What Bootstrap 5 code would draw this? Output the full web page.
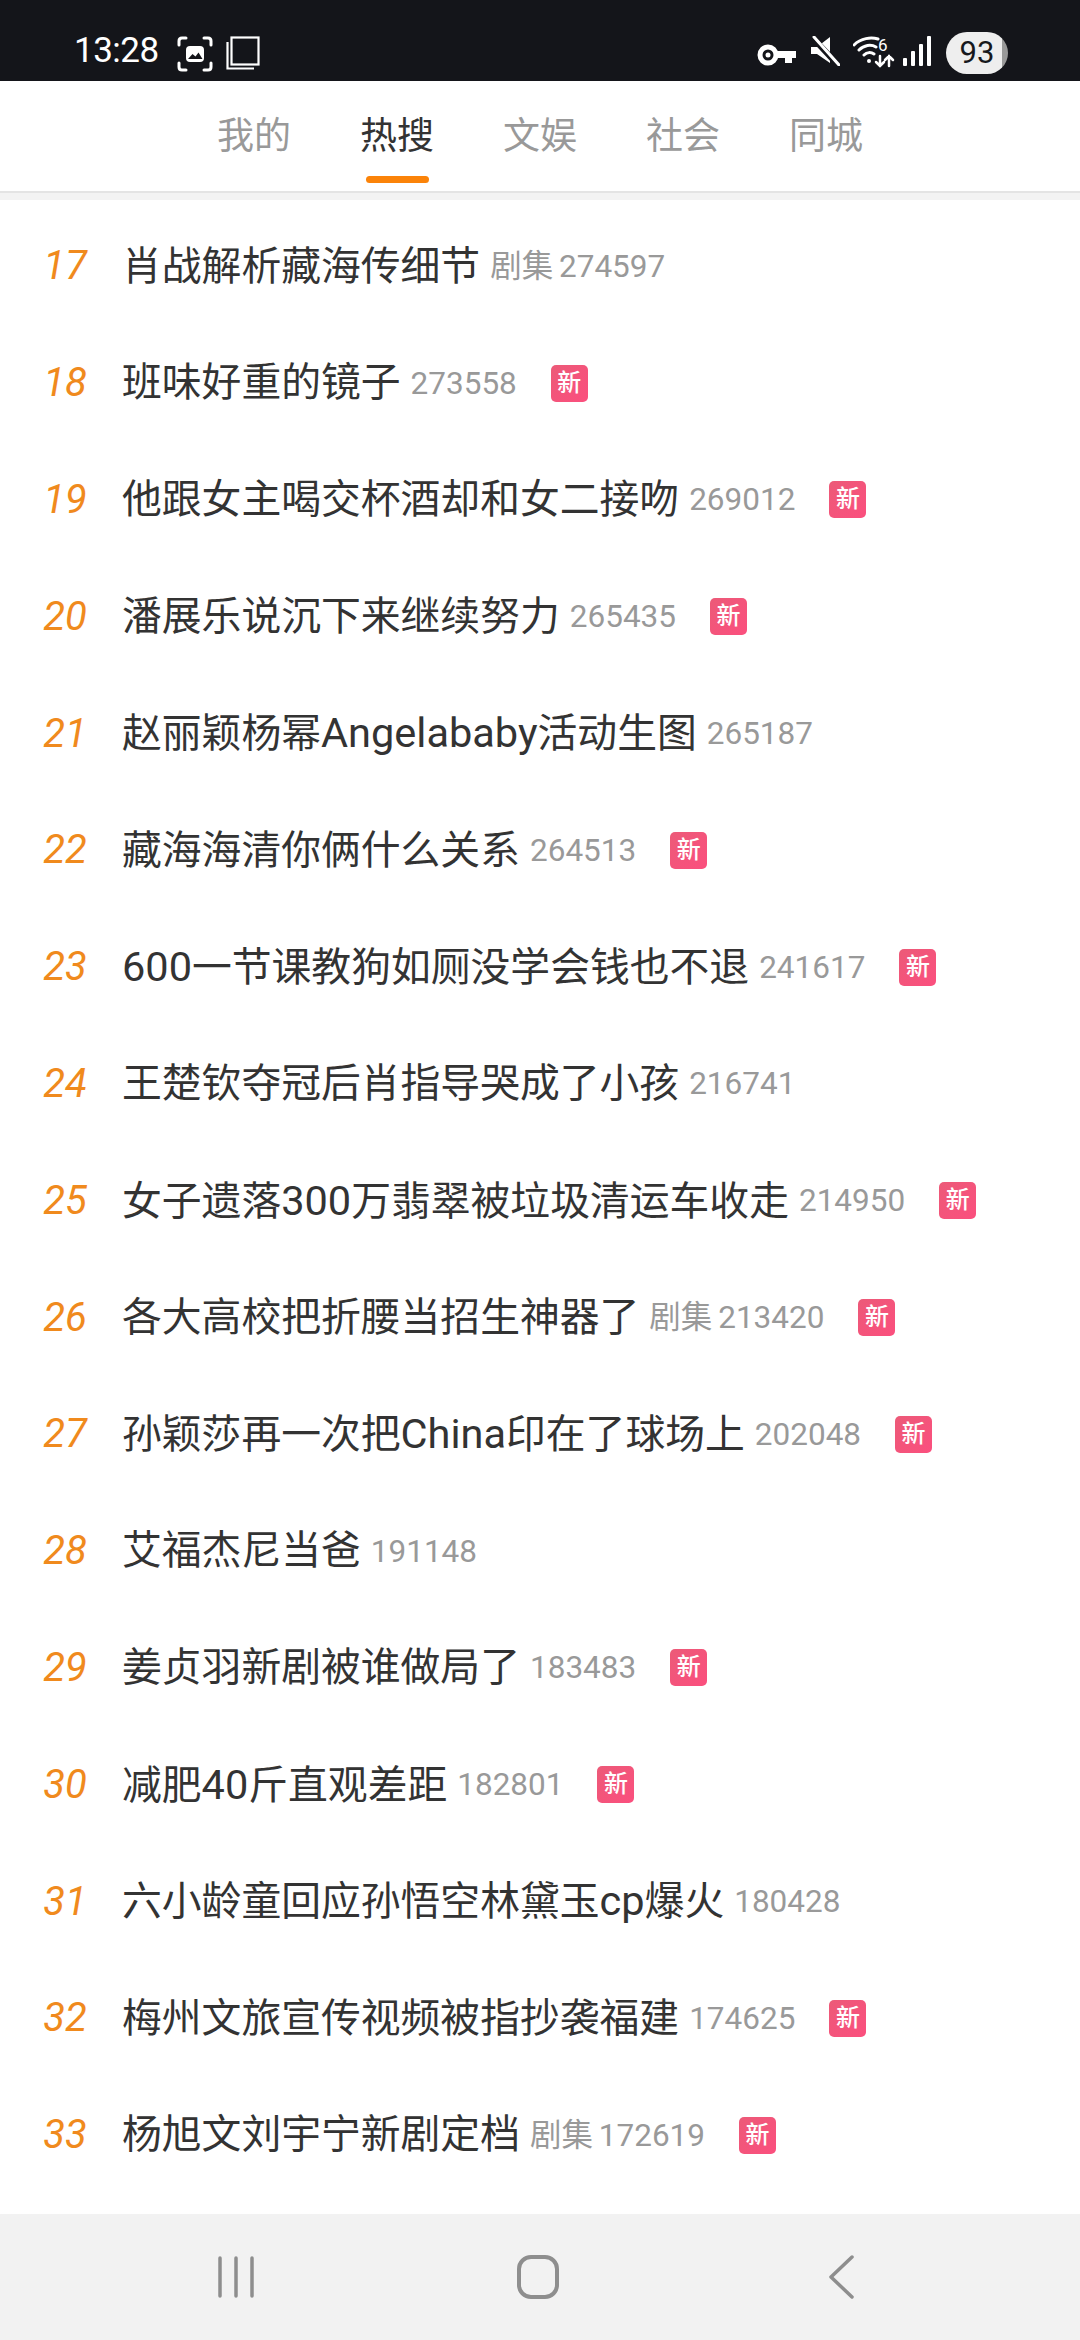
<!DOCTYPE html>
<html lang="zh-CN">
<head>
  <meta charset="UTF-8" />
  <meta name="viewport" content="width=device-width, initial-scale=1.0" />
  <title>热搜</title>
  <link href="https://cdn.jsdelivr.net/npm/bootstrap@5.3.0/dist/css/bootstrap.min.css" rel="stylesheet" />
  <style>
    html, body { height: 2340px; overflow: hidden; }
    body { font-family: Roboto, "Noto Sans CJK SC", sans-serif; color: #333; background: #fff; }
    .page { height: 2340px; }

    .status-bar { height: 81px; background: #14151a; color: #fff; padding: 36px 72px 0 74px; }
    .status-time { font-family: Roboto, sans-serif; font-size: 35px; line-height: 30px; width: 90px; letter-spacing: -0.5px; }
    .status-left { gap: 13px; }
    .status-gap { margin-right: 13px; }
    .battery-pill { width: 62px; height: 42px; margin: -4px 0 0 15px; border-radius: 21px; font-size: 31px; line-height: 42px; color: #17181c; text-align: center; background: linear-gradient(to right, #eee 90%, #999 90%); }

    .top-tabs { height: 112px; border-bottom: 2px solid #e4e4e4; }
    .top-tabs .nav-link { position: relative; width: 143px; height: 110px; padding: 0; font-size: 37px; line-height: 112px; color: #999; text-align: center; }
    .top-tabs .nav-link.active { color: #333; }
    .top-tabs .nav-link.active::after { content: ""; position: absolute; left: 40px; top: 95px; width: 63px; height: 7px; border-radius: 4px; background: #fb8309; }
    .tabs-gap { height: 7px; background: #f3f3f3; }

    .hot-list { padding-top: 8px; }
    .hot-list .list-group-item { height: 116.8px; padding: 0; border: 0; white-space: nowrap; }
    .hot-rank { width: 130px; font-size: 40px; font-style: italic; color: #f08a1d; text-align: center; flex: none; }
    .hot-title { margin-left: -8px; font-size: 39.8px; color: #333; }
    .hot-latin { font-size: 41.5px; }
    .hot-meta { margin-left: 10px; font-size: 31.5px; word-spacing: -2px; color: #999; }
    .hot-new { display: block; width: 37px; height: 37px; margin-left: 34px; padding: 0; border-radius: 5px; font-size: 24px; font-weight: 500; line-height: 37px; color: #fff; background: linear-gradient(135deg, #ec5a78, #fb4f7e); }

    .nav-bar { height: 126px; padding-right: 9px; background: #f2f2f2; }
    .nav-gap-a { margin-right: 262px; }
    .nav-gap-b { margin-right: 269px; }
  </style>
</head>
<body>
  <div class="page d-flex flex-column">
    <!-- status bar -->
    <div class="status-bar d-flex justify-content-between flex-shrink-0">
      <div class="status-left d-flex align-items-start">
        <span class="status-time">13:28</span>
        <svg width="36" height="36" viewBox="0 0 36 36" fill="none" stroke="#fff" stroke-width="3" stroke-linecap="round">
          <path d="M2 9V5q0-3 3-3h4M27 2h4q3 0 3 3v4M34 27v4q0 3-3 3h-4M9 34H5q-3 0-3-3v-4" />
          <rect x="9" y="10" width="18" height="16" rx="4" fill="#fff" stroke="none" />
          <path d="M11 23l4.500-5 3 2.500 3-4 4 6.500z" fill="#14151a" stroke="none" />
        </svg>
        <svg width="34" height="34" viewBox="0 0 34 34" fill="none" stroke="#fff" stroke-width="2.200">
          <rect x="5.500" y="1.500" width="27" height="27" />
          <path d="M1.500 6v26.500H28" />
        </svg>
      </div>
      <div class="d-flex align-items-start">
        <svg width="40" height="22" viewBox="0 0 40 22" fill="none" class="mt-2 status-gap">
          <circle cx="11" cy="11" r="8" stroke="#fff" stroke-width="5" />
          <path d="M18 7h21v7h-4v5h-7v-5H18z" fill="#fff" />
          <circle cx="11" cy="11" r="2.500" fill="#fff" />
        </svg>
        <svg width="30" height="30" viewBox="0 0 30 30" class="status-gap">
          <path d="M1 11h6L20 1v26L7 18H1z" fill="#fff" />
          <path d="M2 1l26 28" stroke="#14151a" stroke-width="6" />
          <path d="M4 1l25 28" stroke="#fff" stroke-width="3" stroke-linecap="round" />
        </svg>
        <svg width="42" height="32" viewBox="0 0 42 32" fill="none" stroke="#fff" stroke-width="3" stroke-linecap="round" class="me-2">
          <path d="M1 9C8 2 18 1 25 3M6 14c5-5 12-6 17-3M11 19c3-3 7-3 10-1" />
          <circle cx="16" cy="25" r="2" fill="#fff" stroke="none" />
          <text x="25" y="15" font-family="Roboto, sans-serif" font-size="17" fill="#fff" stroke="none">6</text>
          <path d="M27 20v10M23 26l4 4 4-4M36 30V20M32 24l4-4 4 4" stroke-width="2.500" />
        </svg>
        <svg width="28" height="30" viewBox="0 0 28 30" fill="#fff">
          <rect x="0" y="22" width="4" height="8" rx="1" />
          <rect x="8" y="15" width="4" height="15" rx="1" />
          <rect x="16" y="8" width="4" height="22" rx="1" />
          <rect x="24" y="0" width="4" height="30" rx="1" />
        </svg>
        <span class="battery-pill">93</span>
      </div>
    </div>

    <!-- tabs -->
    <ul class="nav top-tabs justify-content-center flex-shrink-0">
      <li class="nav-item"><a class="nav-link" href="#">我的</a></li>
      <li class="nav-item"><a class="nav-link active" href="#">热搜</a></li>
      <li class="nav-item"><a class="nav-link" href="#">文娱</a></li>
      <li class="nav-item"><a class="nav-link" href="#">社会</a></li>
      <li class="nav-item"><a class="nav-link" href="#">同城</a></li>
    </ul>
    <div class="tabs-gap flex-shrink-0"></div>

    <!-- hot search list -->
    <div class="hot-list list-group list-group-flush flex-grow-1">
      <div class="list-group-item d-flex align-items-center"><span class="hot-rank">17</span><span class="hot-title">肖战解析藏海传细节</span><span class="hot-meta">剧集 274597</span></div>
      <div class="list-group-item d-flex align-items-center"><span class="hot-rank">18</span><span class="hot-title">班味好重的镜子</span><span class="hot-meta">273558</span><span class="badge hot-new">新</span></div>
      <div class="list-group-item d-flex align-items-center"><span class="hot-rank">19</span><span class="hot-title">他跟女主喝交杯酒却和女二接吻</span><span class="hot-meta">269012</span><span class="badge hot-new">新</span></div>
      <div class="list-group-item d-flex align-items-center"><span class="hot-rank">20</span><span class="hot-title">潘展乐说沉下来继续努力</span><span class="hot-meta">265435</span><span class="badge hot-new">新</span></div>
      <div class="list-group-item d-flex align-items-center"><span class="hot-rank">21</span><span class="hot-title">赵丽颖杨幂<span class="hot-latin">Angelababy</span>活动生图</span><span class="hot-meta">265187</span></div>
      <div class="list-group-item d-flex align-items-center"><span class="hot-rank">22</span><span class="hot-title">藏海海清你俩什么关系</span><span class="hot-meta">264513</span><span class="badge hot-new">新</span></div>
      <div class="list-group-item d-flex align-items-center"><span class="hot-rank">23</span><span class="hot-title"><span class="hot-latin">600</span>一节课教狗如厕没学会钱也不退</span><span class="hot-meta">241617</span><span class="badge hot-new">新</span></div>
      <div class="list-group-item d-flex align-items-center"><span class="hot-rank">24</span><span class="hot-title">王楚钦夺冠后肖指导哭成了小孩</span><span class="hot-meta">216741</span></div>
      <div class="list-group-item d-flex align-items-center"><span class="hot-rank">25</span><span class="hot-title">女子遗落<span class="hot-latin">300</span>万翡翠被垃圾清运车收走</span><span class="hot-meta">214950</span><span class="badge hot-new">新</span></div>
      <div class="list-group-item d-flex align-items-center"><span class="hot-rank">26</span><span class="hot-title">各大高校把折腰当招生神器了</span><span class="hot-meta">剧集 213420</span><span class="badge hot-new">新</span></div>
      <div class="list-group-item d-flex align-items-center"><span class="hot-rank">27</span><span class="hot-title">孙颖莎再一次把<span class="hot-latin">China</span>印在了球场上</span><span class="hot-meta">202048</span><span class="badge hot-new">新</span></div>
      <div class="list-group-item d-flex align-items-center"><span class="hot-rank">28</span><span class="hot-title">艾福杰尼当爸</span><span class="hot-meta">191148</span></div>
      <div class="list-group-item d-flex align-items-center"><span class="hot-rank">29</span><span class="hot-title">姜贞羽新剧被谁做局了</span><span class="hot-meta">183483</span><span class="badge hot-new">新</span></div>
      <div class="list-group-item d-flex align-items-center"><span class="hot-rank">30</span><span class="hot-title">减肥<span class="hot-latin">40</span>斤直观差距</span><span class="hot-meta">182801</span><span class="badge hot-new">新</span></div>
      <div class="list-group-item d-flex align-items-center"><span class="hot-rank">31</span><span class="hot-title">六小龄童回应孙悟空林黛玉<span class="hot-latin">cp</span>爆火</span><span class="hot-meta">180428</span></div>
      <div class="list-group-item d-flex align-items-center"><span class="hot-rank">32</span><span class="hot-title">梅州文旅宣传视频被指抄袭福建</span><span class="hot-meta">174625</span><span class="badge hot-new">新</span></div>
      <div class="list-group-item d-flex align-items-center"><span class="hot-rank">33</span><span class="hot-title">杨旭文刘宇宁新剧定档</span><span class="hot-meta">剧集 172619</span><span class="badge hot-new">新</span></div>
    </div>

    <!-- android nav bar -->
    <div class="nav-bar d-flex justify-content-center align-items-center flex-shrink-0">
      <svg width="38" height="42" viewBox="0 0 38 42" stroke="#8e8e8e" stroke-width="3.500" stroke-linecap="round" class="nav-gap-a">
        <path d="M3 2v38M19 2v38M35 2v38" />
      </svg>
      <svg width="42" height="44" viewBox="0 0 42 44" fill="none" stroke="#8e8e8e" stroke-width="4" class="nav-gap-b">
        <rect x="2" y="2" width="38" height="40" rx="12" />
      </svg>
      <svg width="26" height="44" viewBox="0 0 26 44" fill="none" stroke="#8e8e8e" stroke-width="3.500" stroke-linecap="round" stroke-linejoin="round">
        <path d="M24 2L3 22l21 20" />
      </svg>
    </div>
  </div>
  <script src="https://cdn.jsdelivr.net/npm/bootstrap@5.3.0/dist/js/bootstrap.bundle.min.js"></script>
</body>
</html>
